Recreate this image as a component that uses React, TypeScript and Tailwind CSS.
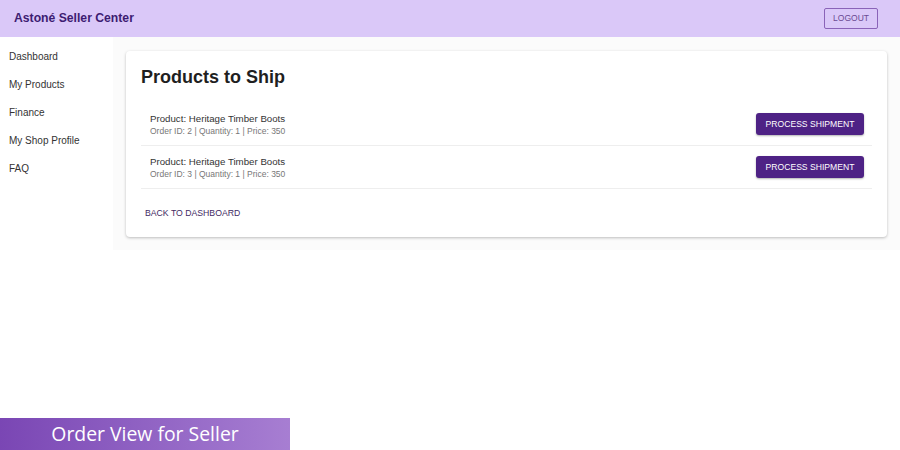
export default function App() {
  const orders = [
    { id: 2, product: "Heritage Timber Boots", qty: 1, price: 350 },
    { id: 3, product: "Heritage Timber Boots", qty: 1, price: 350 },
  ];
  const nav = ["Dashboard", "My Products", "Finance", "My Shop Profile", "FAQ"];

  return (
    <div className="w-[900px] h-[450px] bg-white flex flex-col font-['Liberation_Sans',Arial,sans-serif] relative overflow-hidden">
      {/* Header */}
      <header className="h-[37px] bg-[#dac8f8] flex items-center justify-between pl-[14px] pr-[22px] shrink-0">
        <span className="text-[12.2px] font-bold text-[#3d1c72]">Astoné Seller Center</span>
        <button className="h-[21px] px-[8px] border border-[#8a63b8] rounded-[2px] text-[8.5px] text-[#6a4a93]">
          LOGOUT
        </button>
      </header>

      <div className="flex flex-1">
        {/* Sidebar */}
        <aside className="w-[113px] bg-white pt-[5px] flex flex-col">
          {nav.map((item) => (
            <div key={item} className="h-[28px] pl-[9px] flex items-center text-[10px] text-[#333]">
              {item}
            </div>
          ))}
        </aside>

        {/* Main */}
        <main className="flex-1 bg-[#fbfbfb] pt-[14px] px-[13px] h-[213px]">
          <div className="bg-white rounded-[4px] shadow-[0_1px_3px_rgba(0,0,0,0.25)] px-[15px] pt-[14px] pb-[17px]">
            <h1 className="text-[18px] font-bold text-[#1f1f1f] leading-[24px]">Products to Ship</h1>
            <div className="mt-[14px]">
              {orders.map((o) => (
                <div key={o.id} className="flex items-center justify-between h-[43px] pl-[9px] pr-[8px] border-b border-[#eeeeee]">
                  <div className="flex flex-col">
                    <span className="text-[9.7px] text-[#333] leading-[13px]">Product: {o.product}</span>
                    <span className="text-[8.5px] text-[#777] leading-[12px]">
                      Order ID: {o.id} | Quantity: {o.qty} | Price: {o.price}
                    </span>
                  </div>
                  <button className="w-[108px] h-[22px] bg-[#4e2285] rounded-[3px] text-white text-[8.6px] shadow-[0_1px_2px_rgba(0,0,0,0.3)]">
                    PROCESS SHIPMENT
                  </button>
                </div>
              ))}
            </div>
            <div className="mt-[18px] pl-[4px] text-[8.7px] text-[#3f2a63]">BACK TO DASHBOARD</div>
          </div>
        </main>
      </div>

      {/* Caption banner */}
      <div className="absolute left-0 bottom-0 w-[290px] h-[32px] bg-gradient-to-r from-[#7a46b4] to-[#a77ed2] flex items-center justify-center">
        <span className="text-[19.4px] text-white font-['Open_Sans',sans-serif]">Order View for Seller</span>
      </div>
    </div>
  );
}
